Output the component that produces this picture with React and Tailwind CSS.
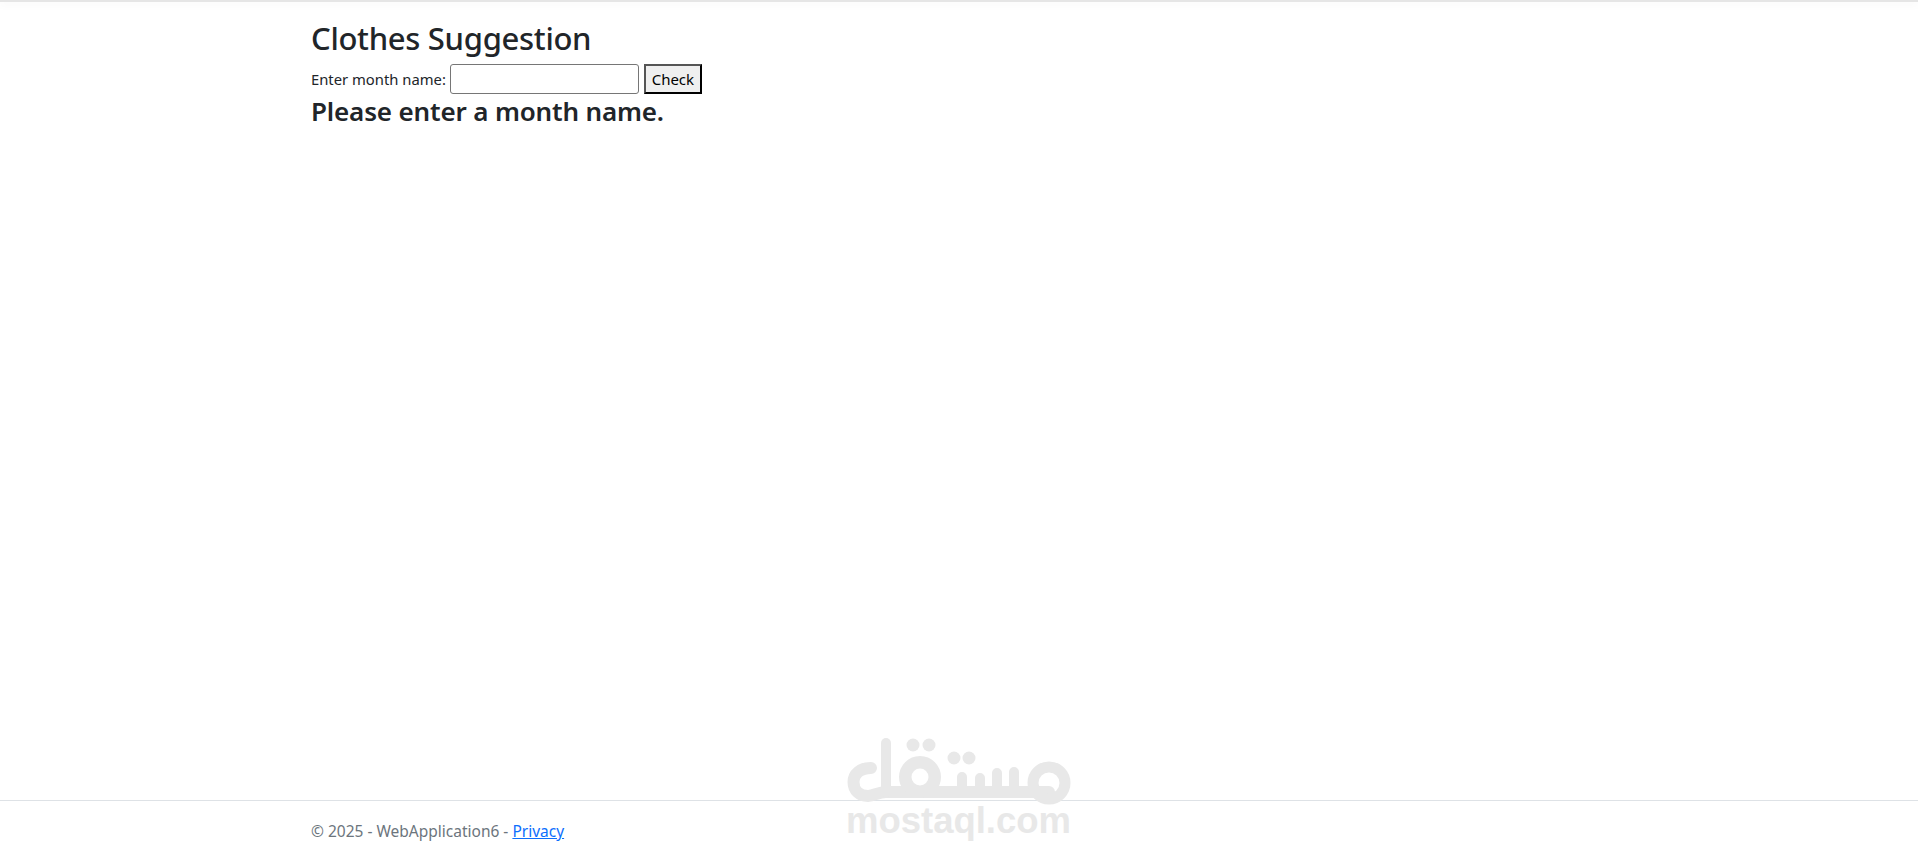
import React from 'react';

const FONT = '"Noto Sans", "Open Sans", sans-serif';

function Watermark() {
    return (
        <div className="absolute left-[840px] top-[730px] w-[240px] flex flex-col items-center pointer-events-none">
            <svg width="240" height="76" viewBox="0 0 240 76" fill="none" stroke="#e8e8e8" strokeWidth="12" strokeLinecap="round" strokeLinejoin="round">
                {/* left bowl and baseline */}
                <path d="M31 38 C20 38 13.5 44 13.5 52 C13.5 61 20 66 28 66 C34 66 38 62 46 62 L209 62" />
                {/* tall stem */}
                <path strokeWidth="10" d="M46 13 L46 62" />
                {/* middle ring */}
                <circle cx="80" cy="47" r="14.75" strokeWidth="12.5" />
                {/* teeth */}
                <path strokeWidth="10" d="M122 47 L122 62 M140 48 L140 62 M157 43 L157 62 M174 42 L174 62" />
                {/* right ring */}
                <circle cx="209" cy="53" r="16" strokeWidth="11" />
                <circle cx="73" cy="15" r="6.5" fill="#e8e8e8" stroke="none" />
                <circle cx="89" cy="15" r="6.5" fill="#e8e8e8" stroke="none" />
                <circle cx="114" cy="28" r="6.5" fill="#e8e8e8" stroke="none" />
                <circle cx="129" cy="28" r="6.5" fill="#e8e8e8" stroke="none" />
            </svg>
            <span className="font-bold text-[36.5px] leading-[37px] text-[#e8e8e8] -mt-[4px] mr-[3px]" style={{ fontFamily: '"Liberation Sans", sans-serif' }}>mostaql.com</span>
        </div>
    );
}

export default function App() {
    return (
        <div className="relative h-[858px] w-full overflow-hidden bg-white flex flex-col text-[#212529]" style={{ fontFamily: FONT }}>
            <div className="h-[2px] bg-[#e5e5e5] shadow-[0_2px_8px_rgba(0,0,0,0.08)]"></div>
            <main className="flex-grow pl-[311px] pt-[17px]">
                <h1 className="text-[31px] leading-[38px] tracking-[-0.3px] font-medium">Clothes Suggestion</h1>
                <div className="flex items-center mt-[7px] h-[30px]">
                    <span className="text-[14.8px]">Enter month name:</span>
                    <input className="ml-[4px] w-[189px] h-[30px] bg-white border border-[#767676] rounded-[3px]" />
                    <button className="ml-[5px] w-[58px] h-[30px] bg-[#efefef] border-2 border-black border-t-[#555555] border-l-[#555555] text-[15px] text-black">Check</button>
                </div>
                <h2 className="text-[26px] leading-[34px] tracking-[-0.15px] font-semibold">Please enter a month name.</h2>
            </main>
            <footer className="h-[58px] border-t border-[#dee2e6] pl-[311px] pt-[18px] text-[15.5px] leading-[24px] text-[#6c757d]">
                © 2025 - WebApplication6 - <a href="#" className="text-[#0d6efd] underline">Privacy</a>
            </footer>
            <Watermark />
        </div>
    );
}
